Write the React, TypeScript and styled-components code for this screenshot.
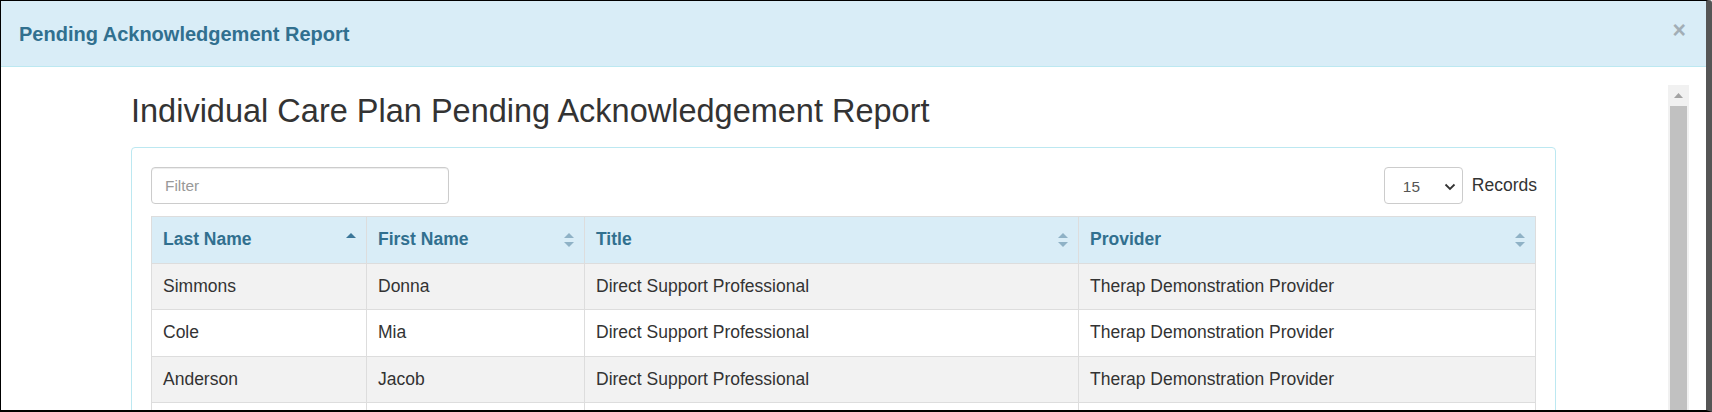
import styled, { createGlobalStyle } from 'styled-components';

const GlobalStyle = createGlobalStyle`
  html, body {
    margin: 0;
    padding: 0;
    overflow: hidden;
    background: #fff;
  }
  * {
    box-sizing: border-box;
  }
`;

const Frame = styled.div`
  width: 1712px;
  height: 412px;
  display: flex;
  flex-direction: column;
  overflow: hidden;
  border-top: 1px solid #000;
  border-left: 1px solid #000;
  border-bottom: 2px solid #000;
  border-right: 6px solid #555;
  border-top-right-radius: 3px;
  font-family: 'Liberation Sans', Arial, sans-serif;
  color: #333;
  background: #fff;
`;

const Header = styled.div`
  flex: none;
  height: 66px;
  display: flex;
  align-items: center;
  justify-content: space-between;
  padding: 0 20px 0 18px;
  background: #d9edf7;
  border-bottom: 1px solid #bce8f1;
`;

const HeaderTitle = styled.h4`
  margin: 0;
  font-size: 20px;
  line-height: 28px;
  font-weight: bold;
  color: #31708f;
`;

const CloseButton = styled.button`
  border: none;
  background: none;
  padding: 0;
  margin-top: -6px;
  font-family: 'Liberation Sans', Arial, sans-serif;
  font-size: 23px;
  font-weight: bold;
  line-height: 1;
  color: #a2aeb6;
  cursor: pointer;
`;

const Body = styled.div`
  flex: 1;
  display: flex;
  min-height: 0;
  padding-right: 17px;
`;

const Content = styled.div`
  flex: 1;
  padding-left: 130px;
`;

const Container = styled.div`
  width: 1425px;
`;

const PageTitle = styled.h2`
  margin: 26px 0 18px 0;
  font-size: 32.5px;
  line-height: 36px;
  font-weight: normal;
  color: #333;
`;

const Panel = styled.div`
  border: 1px solid #bce8f1;
  border-radius: 4px;
  padding: 19px 18px 18px 19px;
`;

const Toolbar = styled.div`
  display: flex;
  align-items: center;
  justify-content: space-between;
  margin-bottom: 12px;
`;

const FilterInput = styled.input`
  width: 298px;
  height: 37px;
  padding: 0 13px;
  border: 1px solid #ccc;
  border-radius: 4px;
  font-family: 'Liberation Sans', Arial, sans-serif;
  font-size: 15.4px;
  color: #555;
  box-shadow: inset 0 1px 1px rgba(0, 0, 0, 0.075);
  &::placeholder {
    color: #999;
  }
`;

const RecordsGroup = styled.div`
  display: flex;
  align-items: center;
  gap: 9px;
`;

const SelectBox = styled.div`
  width: 79px;
  height: 37px;
  display: flex;
  align-items: center;
  justify-content: space-between;
  padding: 3px 6px 0 18px;
  border: 1px solid #ccc;
  border-radius: 4px;
  font-size: 15.4px;
  color: #555;
`;

const RecordsLabel = styled.span`
  font-size: 17.5px;
  color: #333;
`;

const Table = styled.table`
  width: 1384px;
  border-collapse: collapse;
  table-layout: fixed;
  font-size: 17.5px;
`;

const HeadCell = styled.th`
  padding: 10px 10px 10px 11px;
  line-height: 25.5px;
  text-align: left;
  font-weight: bold;
  color: #31708f;
  background: #d9edf7;
  border: 1px solid #ddd;
`;

const HeadInner = styled.div`
  display: flex;
  align-items: center;
  justify-content: space-between;
`;

const Row = styled.tr<{ $striped: boolean }>`
  background: ${(p) => (p.$striped ? '#f2f2f2' : '#fff')};
`;

const Cell = styled.td`
  padding: 10px 11px;
  line-height: 25.5px;
  border: 1px solid #ddd;
  color: #333;
  white-space: nowrap;
  overflow: hidden;
`;

const Scrollbar = styled.div`
  flex: none;
  width: 21px;
  margin-top: 18px;
  display: flex;
  flex-direction: column;
  align-items: center;
  background: #f1f1f1;
`;

const ScrollArrow = styled.div`
  flex: none;
  height: 21px;
  width: 100%;
  display: flex;
  align-items: center;
  justify-content: center;
`;

const ScrollThumb = styled.div`
  flex: 1;
  width: 17px;
  background: #c1c1c1;
`;

const SortIcon = ({ active }: { active: boolean }) => (
  <svg width="10" height="14" viewBox="0 0 10 14">
    <polygon points="0,5 5,0 10,5" fill={active ? '#3b7799' : '#8fb2c6'} />
    {!active && <polygon points="0,9 5,14 10,9" fill="#8fb2c6" />}
  </svg>
);

const Chevron = () => (
  <svg width="12" height="8" viewBox="0 0 12 8">
    <polyline points="1.5,1.5 6,6 10.5,1.5" fill="none" stroke="#333" strokeWidth="1.8" />
  </svg>
);

const columns = [
  { label: 'Last Name', width: 215, active: true },
  { label: 'First Name', width: 218, active: false },
  { label: 'Title', width: 494, active: false },
  { label: 'Provider', width: 457, active: false },
];

// last row only peeks in at the bottom edge, so it stays empty
const rows = [
  ['Simmons', 'Donna', 'Direct Support Professional', 'Therap Demonstration Provider'],
  ['Cole', 'Mia', 'Direct Support Professional', 'Therap Demonstration Provider'],
  ['Anderson', 'Jacob', 'Direct Support Professional', 'Therap Demonstration Provider'],
  ['\u00a0', '\u00a0', '\u00a0', '\u00a0'],
];

const App = () => {
  return (
    <>
      <GlobalStyle />
      <Frame>
        <Header>
          <HeaderTitle>Pending Acknowledgement Report</HeaderTitle>
          <CloseButton aria-label="Close">×</CloseButton>
        </Header>
        <Body>
          <Content>
            <Container>
              <PageTitle>Individual Care Plan Pending Acknowledgement Report</PageTitle>
              <Panel>
                <Toolbar>
                  <FilterInput type="text" placeholder="Filter" />
                  <RecordsGroup>
                    <SelectBox>
                      <span>15</span>
                      <Chevron />
                    </SelectBox>
                    <RecordsLabel>Records</RecordsLabel>
                  </RecordsGroup>
                </Toolbar>
                <Table>
                  <colgroup>
                    {columns.map((c) => (
                      <col key={c.label} style={{ width: c.width }} />
                    ))}
                  </colgroup>
                  <thead>
                    <tr>
                      {columns.map((c) => (
                        <HeadCell key={c.label}>
                          <HeadInner>
                            <span>{c.label}</span>
                            <SortIcon active={c.active} />
                          </HeadInner>
                        </HeadCell>
                      ))}
                    </tr>
                  </thead>
                  <tbody>
                    {rows.map((r, i) => (
                      <Row key={i} $striped={i % 2 === 0}>
                        {r.map((v, j) => (
                          <Cell key={j}>{v}</Cell>
                        ))}
                      </Row>
                    ))}
                  </tbody>
                </Table>
              </Panel>
            </Container>
          </Content>
          <Scrollbar>
            <ScrollArrow>
              <svg width="9" height="5" viewBox="0 0 9 5">
                <polygon points="0,5 4.5,0 9,5" fill="#a3a3a3" />
              </svg>
            </ScrollArrow>
            <ScrollThumb />
          </Scrollbar>
        </Body>
      </Frame>
    </>
  );
};

export default App;
